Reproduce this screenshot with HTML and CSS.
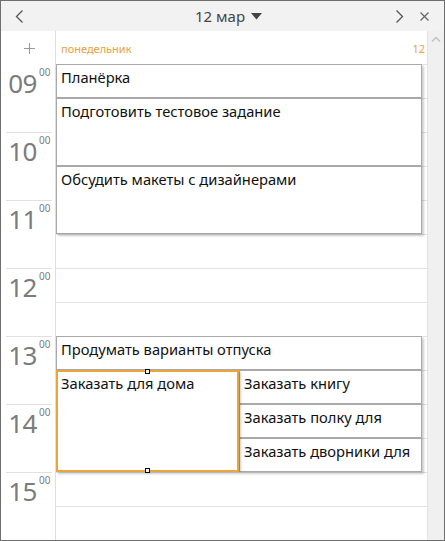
FILE: index.html
```html
<!DOCTYPE html>
<html lang="ru">
<head>
    <meta charset="UTF-8">
    <title>Календарь — 12 мар</title>
    <link rel="stylesheet" href="styles.css">
</head>
<body>
    <div class="window">
        <!-- Top bar -->
        <header class="topbar">
            <button class="icon-btn prev" aria-label="Назад">
                <svg width="9" height="13" viewBox="0 0 9 13"><polyline points="7.5,0.5 1.5,6.5 7.5,12.5" fill="none" stroke="#555" stroke-width="1.3"/></svg>
            </button>
            <div class="title">12 мар
                <svg class="caret" width="11" height="7" viewBox="0 0 11 7"><polygon points="0,0 11,0 5.5,6.5" fill="#444"/></svg>
            </div>
            <button class="icon-btn next" aria-label="Вперёд">
                <svg width="9" height="13" viewBox="0 0 9 13"><polyline points="1.5,0.5 7.5,6.5 1.5,12.5" fill="none" stroke="#555" stroke-width="1.3"/></svg>
            </button>
            <button class="icon-btn close" aria-label="Закрыть">
                <svg width="9" height="9" viewBox="0 0 9 9"><path d="M0.5 0.5L8.5 8.5M8.5 0.5L0.5 8.5" stroke="#666" stroke-width="1.2"/></svg>
            </button>
        </header>

        <div class="body">
            <!-- Hours column -->
            <div class="gutter">
                <div class="add">
                    <svg width="11" height="11" viewBox="0 0 11 11"><path d="M5.5 0V11M0 5.5H11" stroke="#9a9a9a" stroke-width="1"/></svg>
                </div>
                <div class="hour"><span class="h">09</span><span class="m">00</span></div>
                <div class="hour"><span class="h">10</span><span class="m">00</span></div>
                <div class="hour"><span class="h">11</span><span class="m">00</span></div>
                <div class="hour"><span class="h">12</span><span class="m">00</span></div>
                <div class="hour"><span class="h">13</span><span class="m">00</span></div>
                <div class="hour"><span class="h">14</span><span class="m">00</span></div>
                <div class="hour"><span class="h">15</span><span class="m">00</span></div>
            </div>

            <!-- Day column -->
            <div class="day">
                <div class="day-head">
                    <span>понедельник</span>
                    <span>12</span>
                </div>
                <div class="slots">
                    <div class="event wide r1">Планёрка</div>
                    <div class="event wide r2">Подготовить тестовое задание</div>
                    <div class="event wide r4">Обсудить макеты с дизайнерами</div>
                    <div class="event wide r9">Продумать варианты отпуска</div>
                    <div class="event selected r10">Заказать для дома
                        <span class="handle top"></span>
                        <span class="handle bottom"></span>
                    </div>
                    <div class="event side r10">Заказать книгу</div>
                    <div class="event side r11">Заказать полку для</div>
                    <div class="event side r12">Заказать дворники для</div>
                </div>
            </div>

            <!-- Scrollbar -->
            <div class="scrollbar">
                <svg width="10" height="7" viewBox="0 0 10 7"><polyline points="1,5.5 5,1.5 9,5.5" fill="none" stroke="#c2c2c2" stroke-width="1.5"/></svg>
            </div>
        </div>
    </div>
</body>
</html>
```

FILE: styles.css
```css
* {
    margin: 0;
    padding: 0;
    box-sizing: border-box;
}

body {
    font-family: 'Segoe UI', 'Noto Sans', 'Open Sans', sans-serif;
    background: #fff;
}

.window {
    width: 445px;
    height: 541px;
    border: 1px solid #6e6e6e;
    display: flex;
    flex-direction: column;
    overflow: hidden;
}

/* Top bar */
.topbar {
    height: 30px;
    flex: none;
    background: #f2f2f2;
    display: flex;
    align-items: center;
}

.icon-btn {
    border: none;
    background: none;
    display: flex;
    align-items: center;
    justify-content: center;
}

.prev {
    margin-left: 14px;
}

.title {
    flex: 1;
    display: flex;
    align-items: center;
    justify-content: center;
    gap: 6px;
    font-size: 15px;
    color: #454545;
    padding-left: 38px;
    padding-bottom: 1px;
}

.caret {
    margin-top: 1px;
}

.next {
    margin-right: 16px;
}

.close {
    margin-right: 15px;
}

/* Body */
.body {
    flex: 1;
    display: flex;
    min-height: 0;
}

.gutter {
    width: 55px;
    flex: none;
    border-right: 1px solid #dedede;
}

.add {
    height: 33px;
    display: flex;
    align-items: center;
    justify-content: center;
    padding-left: 3px;
    padding-top: 1px;
}

.hour {
    height: 68px;
    margin: 0 3px 0 5px;
    display: flex;
    justify-content: flex-end;
    align-items: flex-start;
    color: #7c7c7c;
}

.hour + .hour {
    border-top: 1px solid #e0e0e0;
}

.hour .h {
    font-size: 26px;
    line-height: 26px;
    margin-top: 6px;
    letter-spacing: -0.5px;
}

.hour + .hour .h {
    margin-top: 5px;
}

.hour .m {
    font-size: 10px;
    line-height: 10px;
    margin-top: 3px;
    margin-left: 2px;
    width: 13px;
}

.hour + .hour .m {
    margin-top: 2px;
}

/* Day column */
.day {
    width: 372px;
    flex: none;
    border-right: 1px solid #e2e2e2;
    display: flex;
    flex-direction: column;
}

.day-head {
    height: 33px;
    flex: none;
    display: flex;
    justify-content: space-between;
    align-items: center;
    padding: 1px 2px 0 5px;
    font-size: 11px;
    color: #e9a33a;
}

.slots {
    flex: 1;
    display: grid;
    grid-template-columns: 1fr 1fr;
    grid-template-rows: repeat(14, 34px);
    padding-right: 5px;
    background-image: linear-gradient(#e3e3e3 1px, transparent 1px);
    background-size: 100% 34px;
}

.event {
    background: #fff;
    border: 1px solid #a9a9a9;
    box-shadow: 2px 2px 2px rgba(0, 0, 0, 0.2);
    padding: 2px 4px;
    font-size: 14.7px;
    line-height: 20px;
    color: #111;
    white-space: nowrap;
    overflow: hidden;
}

.wide {
    grid-column: 1 / 3;
}

.side {
    grid-column: 2;
}

.r1 { grid-row: 1; }
.r2 { grid-row: 2 / 4; }
.r4 { grid-row: 4 / 6; }
.r9 { grid-row: 9; }
.r10 { grid-row: 10; }
.r11 { grid-row: 11; }
.r12 { grid-row: 12; }

.selected {
    grid-column: 1;
    grid-row: 10 / 13;
    border: 2px solid #eaa63a;
    padding: 1px 3px;
    overflow: visible;
    position: relative;
    z-index: 2;
}

.handle {
    position: absolute;
    left: 50%;
    width: 5px;
    height: 5px;
    margin-left: -3px;
    background: #fff;
    border: 1px solid #000;
}

.handle.top {
    top: -3px;
}

.handle.bottom {
    bottom: -3px;
}

/* Scrollbar */
.scrollbar {
    width: 16px;
    flex: none;
    background: #f0f0f0;
    display: flex;
    justify-content: center;
    align-items: flex-start;
    padding-top: 5px;
}
```
